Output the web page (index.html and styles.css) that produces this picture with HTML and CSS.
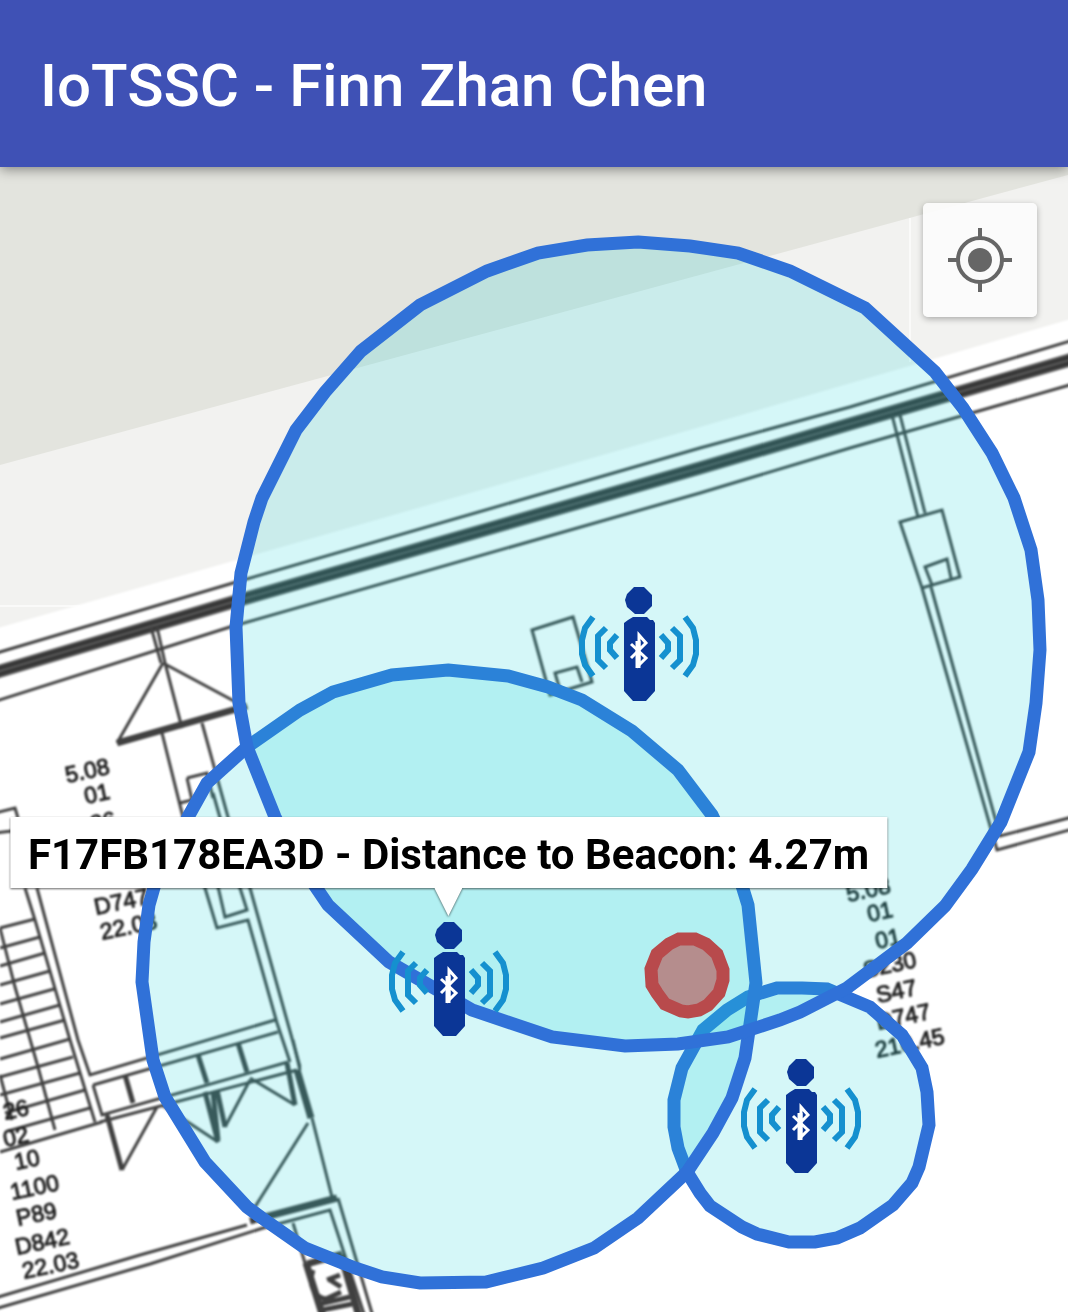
FILE: index.html
```html
<!DOCTYPE html>
<html lang="en">
<head>
<meta charset="utf-8">
<meta name="viewport" content="width=device-width, initial-scale=1">
<title>IoTSSC - Finn Zhan Chen</title>
<link rel="stylesheet" href="styles.css">
</head>
<body>
<header class="app-bar">
  <h1 class="app-title">IoTSSC - Finn Zhan Chen</h1>
</header>
<main class="map">
  <svg class="map-canvas" viewBox="0 167 1068 1145" role="img" aria-label="Indoor map with beacon ranges">
    <defs>
      <symbol id="beacon" viewBox="0 0 120 114">
        <path class="beacon-body" d="M55 0H65L69 4L73 8V19L69 23L65 27H56L48 20L46 13L48 7ZM54 30H68L71 33H74L76 36V104L67 114H54L45 104V36L49 33Z"/>
        <g id="waves" class="beacon-wave">
          <path d="M14 30L6 41L3 53V67L6 78L14 89"/>
          <path d="M27 41L19 49V73L27 81"/>
          <path d="M38 48L31 56V63L38 71"/>
        </g>
        <use href="#waves" transform="matrix(-1 0 0 1 120 0)"/>
        <path class="beacon-glyph" d="M52 57L67 71L60 78V48L67 56L52 71"/>
        <path class="beacon-glyph beacon-stem" d="M59 54V81"/>
      </symbol>
    </defs>

    <!-- terrain -->
    <rect class="ground" x="0" y="167" width="1068" height="1145"/>
    <path class="pavement" d="M0 465L1068 175V1312H0Z"/>
    <path class="tile-edge" d="M910 218V362M0 606H80"/>

    <!-- floor plan -->
    <g class="plan">
      <path class="floor" d="M-20 633L240 559L700 427L1088 314V1332H-20Z"/>
      <path class="wall-core" d="M-10 674L233 602L700 468L850 424L1080 357"/>
      <path class="wall-grain" d="M-10 671L233 599L700 465L850 421L1080 354M-10 677L233 605L700 471L850 427L1080 360"/>
      <path class="line" d="M-10 655L233 583L700 448L850 407L1080 338M-10 703L230 627L700 493L850 448L1080 382"/>
      <path class="line" d="M151 627L161 663M157 627L165 663L182 728M163 663L117 743M163 663L247 708M162 733L183 817L205 888L217 928L248 920L277 1023L290 1062M202 723L228 817L250 888L300 1067M213 793L240 888L247 910L225 917L205 830M187 778L207 773L213 798M187 778L192 800L180 803"/>
      <path class="line heavy" d="M117 743L247 706"/>
      <path class="line" d="M-5 813L15 808L18 818M-5 833L12 831M25 888L35 920L70 1040L95 1122M37 888L78 1040L90 1075L275 1020M93 1085L278 1032M93 1085L102 1115L288 1062M100 1122L297 1070M0 1152L102 1122"/>
      <path class="line" d="M0 928L35 919M0 948L40 937M0 966L45 953M0 985L50 971M0 1004L54 989M0 1022L60 1005M0 1038L65 1020M0 1059L70 1039M0 1077L73 1057M0 1095L80 1073M5 1113L85 1090M8 1131L90 1108M0 928L15 987L38 1067L55 1130M0 1075L12 1120"/>
      <path class="line post" d="M125 1075L133 1103M198 1055L207 1083M238 1043L247 1072M107 1115L122 1170M205 1092L218 1142M213 1092L218 1140M217 1090L225 1127M287 1063L295 1105"/>
      <path class="line heavy" d="M297 1070L311 1118"/>
      <path class="line" d="M122 1170L157 1107M225 1127L250 1080M162 1105L218 1142M250 1078L295 1105M293 1040L300 1070M312 1118L332 1197M308 1123L253 1210"/>
      <path class="line heavy" d="M250 1221L337 1198"/>
      <path class="line" d="M-5 1298L140 1255L247 1225M-5 1309L150 1264L263 1228L330 1210L366 1320M338 1198L374 1320M293 1223L322 1320"/>
      <path class="line heavy" d="M306 1263L324 1320M341 1255L360 1320M307 1264L342 1254"/>
      <path class="line post" d="M313 1270C308 1285 315 1298 326 1299L341 1292M327 1280L340 1275M330 1280L341 1287M320 1304L350 1297M322 1310L352 1304"/>
      <path class="line" d="M892 415L918 517M900 415L925 513M900 522L942 510L960 577L922 588ZM932 585L925 567L947 559L951 578M922 588L997 850L1080 827M931 587L1000 836L1080 815"/>
      <path class="line" d="M532 630L573 617L592 682L550 695ZM560 690L555 673L577 667L582 682"/>
      <g class="plan-text">
        <text transform="translate(67 783) rotate(-12)">5.08</text>
        <text transform="translate(86 804) rotate(-12)">01</text>
        <text transform="translate(92 832) rotate(-12)">26</text>
        <text transform="translate(96 915) rotate(-12)">D747</text>
        <text transform="translate(102 940) rotate(-12)">22.03</text>
        <text transform="translate(5 1120) rotate(-12)">26</text>
        <text transform="translate(5 1147) rotate(-12)">02</text>
        <text transform="translate(16 1170) rotate(-12)">10</text>
        <text transform="translate(12 1200) rotate(-12)">1100</text>
        <text transform="translate(18 1226) rotate(-12)">P89</text>
        <text transform="translate(17 1255) rotate(-12)">D842</text>
        <text transform="translate(24 1279) rotate(-12)">22.03</text>
        <text transform="translate(848 902) rotate(-12)">5.08</text>
        <text transform="translate(869 922) rotate(-12)">01</text>
        <text transform="translate(877 949) rotate(-12)">01</text>
        <text transform="translate(865 978) rotate(-12)">S230</text>
        <text transform="translate(878 1003) rotate(-12)">S47</text>
        <text transform="translate(878 1030) rotate(-12)">D747</text>
        <text transform="translate(877 1058) rotate(-12)">210.45</text>
      </g>
    </g>

    <!-- beacon ranges -->
    <polygon class="range" points="802,988 827,989 870,1007 902,1035 922,1068 927,1092 929,1125 919,1167 912,1183 893,1205 860,1228 837,1238 815,1242 789,1242 757,1234 742,1227 710,1206 700,1193 687,1172 678,1148 674,1127 674,1100 682,1068 703,1030 727,1010 748,997 777,988"/>
    <polygon class="range" points="448,670 508,676 548,687 582,700 632,731 678,770 712,815 736,866 748,905 756,983 745,1058 732,1098 713,1133 687,1172 638,1218 594,1248 543,1268 486,1282 420,1283 382,1277 355,1268 305,1248 262,1218 247,1207 205,1162 165,1097 153,1060 142,982 144,942 149,905 155,884 188,817 207,783 247,747 300,710 333,692 392,675"/>
    <polygon class="range" points="638,242 690,246 738,253 790,271 865,308 935,372 963,408 992,453 1014,498 1031,550 1038,600 1040,650 1036,703 1029,752 1001,822 972,869 945,906 907,943 847,988 800,1012 780,1020 728,1037 678,1044 625,1046 552,1037 472,1010 389,962 328,905 300,864 275,817 247,747 239,703 236,627 241,573 254,522 262,498 296,430 325,392 361,351 420,305 487,271 538,253 587,245"/>
    <polygon class="position" points="679,939 695,939 706,944 717,954 723,970 723,980 719,993 708,1005 699,1010 688,1012 681,1011 665,1004 657,993 652,985 651,969 657,954 669,944"/>

    <use href="#beacon" x="579" y="587" width="120" height="114"/>
    <use href="#beacon" x="389" y="922" width="120" height="114"/>
    <use href="#beacon" x="741" y="1059" width="120" height="114"/>
  </svg>

  <button class="locate" type="button" aria-label="Show my location">
    <svg class="locate-icon" viewBox="0 0 64 64" aria-hidden="true">
      <circle class="locate-ring" cx="32" cy="32" r="22"/>
      <circle class="locate-dot" cx="32" cy="32" r="12"/>
      <path class="locate-ring" d="M32 0V9M32 55V64M0 32H9M55 32H64"/>
    </svg>
  </button>

  <div class="info-window" role="tooltip">
    <div class="info-text">F17FB178EA3D - Distance to Beacon: 4.27m</div>
    <svg class="info-tail" viewBox="0 0 28 28" aria-hidden="true"><path d="M0 0H28L14 28Z"/></svg>
  </div>
</main>
</body>
</html>
```
FILE: styles.css
```css
* {
  box-sizing: border-box;
}

body {
  margin: 0;
  font-family: Roboto, "Liberation Sans", sans-serif;
  background: #fff;
}

.app-bar {
  position: relative;
  z-index: 1;
  padding: 50px 40px 45px;
  background: #3f51b5;
  box-shadow: 0 2px 12px rgba(0, 0, 0, 0.45);
}

.app-title {
  margin: 0;
  color: #fff;
  font-size: 60px;
  line-height: 72px;
  font-weight: 500;
}

.map {
  position: relative;
  overflow: hidden;
}

.map-canvas {
  display: block;
  width: 100%;
  height: auto;
}

.ground {
  fill: #e3e4de;
}

.pavement {
  fill: #f2f2f0;
}

.tile-edge {
  fill: none;
  stroke: #fafaf9;
  stroke-width: 2;
}

.plan {
  filter: blur(1px);
}

.floor {
  fill: #fff;
}

.wall-core,
.wall-grain,
.line {
  fill: none;
  stroke: #404040;
}

.wall-core {
  stroke: #555;
  stroke-width: 13;
}

.wall-grain {
  stroke: #333;
  stroke-width: 3;
}

.line {
  stroke-width: 3;
}

.post {
  stroke-width: 5;
}

.heavy {
  stroke-width: 7;
}

.plan-text {
  fill: #222;
  stroke: #222;
  stroke-width: 1;
  font-family: "Liberation Sans", sans-serif;
  font-size: 23px;
}

.range {
  fill: rgba(24, 212, 217, 0.18);
  stroke: #3071d8;
  stroke-width: 13;
}

.position {
  fill: #b58d8d;
  stroke: #b84a4c;
  stroke-width: 13;
}

.beacon-body {
  fill: #0b3696;
}

.beacon-wave {
  fill: none;
  stroke: #1590cf;
  stroke-width: 6;
}

.beacon-glyph {
  fill: none;
  stroke: #fff;
  stroke-width: 3;
}

.beacon-stem {
  stroke-width: 5;
}

.locate {
  position: absolute;
  top: 36px;
  right: 31px;
  display: grid;
  place-items: center;
  width: 114px;
  height: 114px;
  padding: 0;
  border: 0;
  border-radius: 5px;
  background: rgba(252, 252, 252, 0.9);
  box-shadow: 0 2px 6px rgba(0, 0, 0, 0.3);
}

.locate-icon {
  width: 64px;
  height: 64px;
}

.locate-ring {
  fill: none;
  stroke: #666;
  stroke-width: 4;
}

.locate-dot {
  fill: #666;
}

.info-window {
  position: absolute;
  left: 42%;
  top: 65.4%;
  display: flex;
  flex-direction: column;
  align-items: center;
  transform: translate(-50%, -100%);
  filter: drop-shadow(0 1px 1px rgba(0, 0, 0, 0.6));
}

.info-text {
  padding: 14px 18px 9px;
  background: #fff;
  color: #000;
  font-size: 42px;
  line-height: 48px;
  font-weight: 700;
  white-space: nowrap;
}

.info-tail {
  display: block;
  width: 28px;
  height: 28px;
  fill: #fff;
}
```
